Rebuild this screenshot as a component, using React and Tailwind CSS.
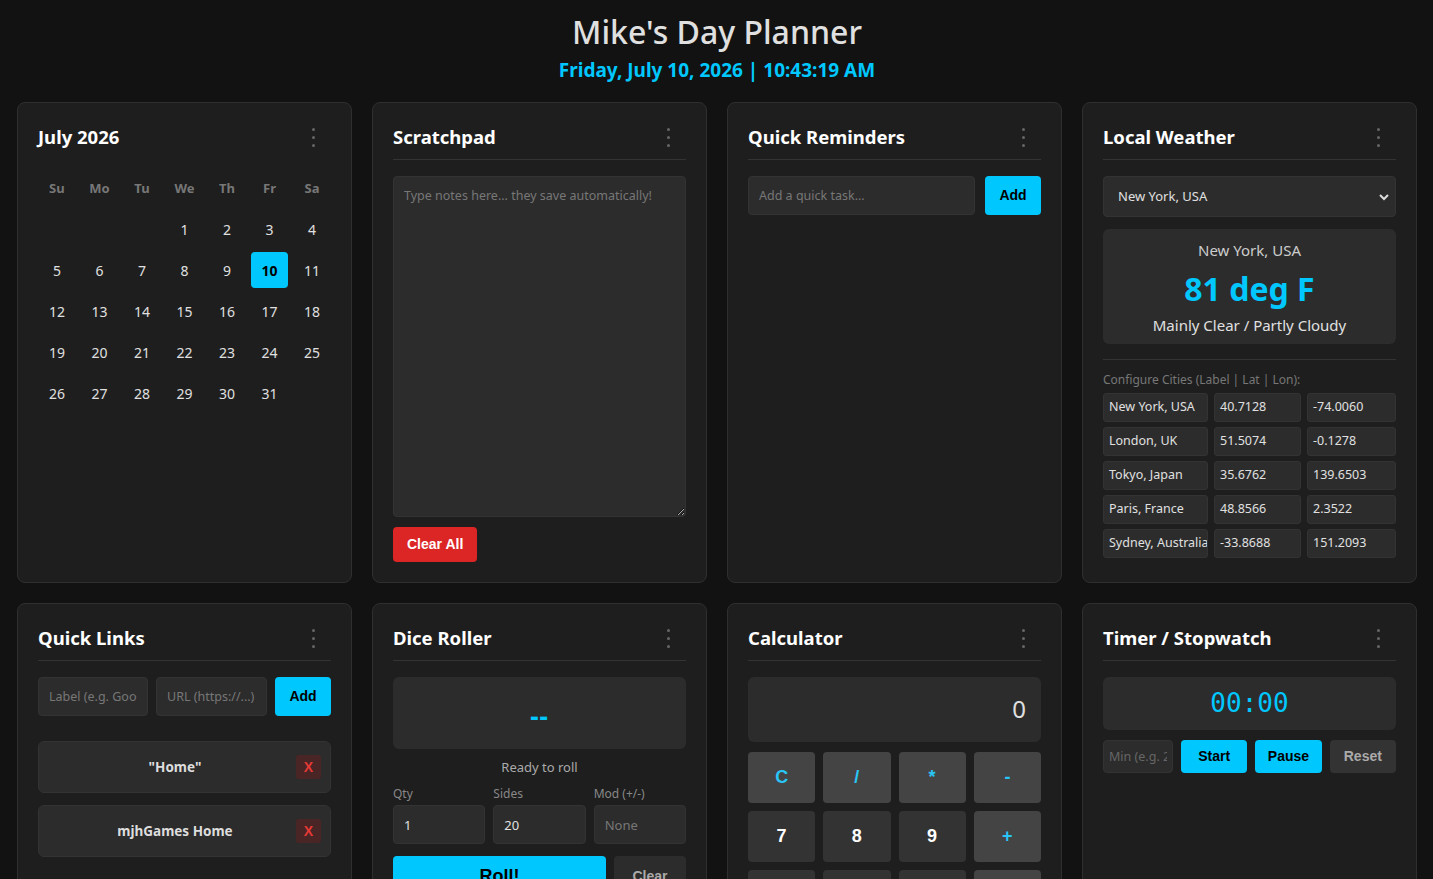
import React from "react";

const CYAN = "bg-[#00c8ff]";

function Dots() {
  return (
    <div className="mr-[8px] flex w-[20px] flex-col items-center gap-[5px]">
      <span className="h-[3px] w-[3px] rounded-full bg-[#666]" />
      <span className="h-[3px] w-[3px] rounded-full bg-[#666]" />
      <span className="h-[3px] w-[3px] rounded-full bg-[#666]" />
    </div>
  );
}

function Card({ title, children, plainHeader = false }) {
  return (
    <div className="rounded-[8px] border border-[#2f2f2f] bg-[#1e1e1e] px-[20px] pt-[19px] pb-[20px]">
      <div
        className={
          "flex h-[38px] items-start justify-between border-b pt-[3px] " +
          (plainHeader ? "mb-[10px] border-transparent" : "mb-[16px] border-[#333]")
        }
      >
        <h2 className="text-[18.5px] leading-[24px] font-bold text-white">{title}</h2>
        <div className="pt-[3px]">
          <Dots />
        </div>
      </div>
      {children}
    </div>
  );
}

function Calendar() {
  const heads = ["Su", "Mo", "Tu", "We", "Th", "Fr", "Sa"];
  const cells = [null, null, null];
  for (let d = 1; d <= 31; d++) cells.push(d);
  return (
    <Card title="July 2026" plainHeader>
      <div className="grid grid-cols-7 gap-x-[4.67px] gap-y-[5px]">
        {heads.map((h) => (
          <div key={h} className="flex h-[36px] items-center justify-center pt-[2px] text-[13px] font-bold text-[#777]">
            {h}
          </div>
        ))}
        {cells.map((d, i) =>
          d === 10 ? (
            <div key={i} className={"flex h-[36px] items-center justify-center rounded-[4px] text-[14px] font-bold text-black " + CYAN}>
              {d}
            </div>
          ) : (
            <div key={i} className="flex h-[36px] items-center justify-center text-[14px] text-[#e0e0e0]">
              {d}
            </div>
          )
        )}
      </div>
    </Card>
  );
}

function Scratchpad() {
  return (
    <Card title="Scratchpad">
      <textarea
        placeholder="Type notes here... they save automatically!"
        className="block h-[341px] w-full resize-y rounded-[4px] border border-[#333] bg-[#2c2c2c] px-[10px] py-[10px] text-[12.5px] text-[#e0e0e0] placeholder-[#777] outline-none"
      />
      <button className="mt-[10px] h-[35px] rounded-[4px] bg-[#dc2626] px-[14px] font-['Liberation_Sans',Arial,sans-serif] text-[14px] font-bold text-white">
        Clear All
      </button>
    </Card>
  );
}

function Reminders() {
  return (
    <Card title="Quick Reminders">
      <div className="flex gap-[10px]">
        <input
          placeholder="Add a quick task..."
          className="h-[39px] min-w-0 flex-1 rounded-[4px] border border-[#333] bg-[#2c2c2c] px-[10px] text-[12.5px] text-[#e0e0e0] placeholder-[#777] outline-none"
        />
        <button className={"h-[39px] w-[56px] rounded-[4px] font-['Liberation_Sans',Arial,sans-serif] text-[14px] font-bold text-black " + CYAN}>
          Add
        </button>
      </div>
    </Card>
  );
}

function Weather() {
  const cities = [
    ["New York, USA", "40.7128", "-74.0060"],
    ["London, UK", "51.5074", "-0.1278"],
    ["Tokyo, Japan", "35.6762", "139.6503"],
    ["Paris, France", "48.8566", "2.3522"],
    ["Sydney, Australia", "-33.8688", "151.2093"],
  ];
  return (
    <Card title="Local Weather">
      <div className="relative flex h-[41px] items-center rounded-[4px] border border-[#333] bg-[#2c2c2c] px-[14px] text-[13px] text-[#e0e0e0]">
        New York, USA
        <svg className="absolute right-[5px] top-[15px]" width="12" height="10" viewBox="0 0 12 10">
          <path d="M2 3 L6 7 L10 3" fill="none" stroke="#ddd" strokeWidth="2" />
        </svg>
      </div>
      <div className="mt-[12px] flex h-[115px] flex-col items-center rounded-[6px] bg-[#2c2c2c] pt-[11px]">
        <div className="text-[15px] leading-[20px] text-[#ccc]">New York, USA</div>
        <div className="mt-[9px] text-[32px] leading-[40px] font-bold text-[#00c8ff]">81 deg F</div>
        <div className="mt-[6px] text-[15px] leading-[20px] text-[#e0e0e0]">Mainly Clear / Partly Cloudy</div>
      </div>
      <div className="mt-[15px] border-t border-[#333] pt-[12px]">
        <div className="text-[12px] leading-[16px] text-[#777]">Configure Cities (Label | Lat | Lon):</div>
        <div className="mt-[5px] flex flex-col gap-[5px]">
          {cities.map((c) => (
            <div key={c[0]} className="flex gap-[6px]">
              <div className="flex h-[29px] w-[105px] items-center overflow-hidden whitespace-nowrap rounded-[3px] border border-[#333] bg-[#2c2c2c] px-[5px] text-[12.5px] text-[#e0e0e0]">
                {c[0]}
              </div>
              <div className="flex h-[29px] w-[87px] items-center rounded-[3px] border border-[#333] bg-[#2c2c2c] px-[5px] text-[12.5px] text-[#e0e0e0]">
                {c[1]}
              </div>
              <div className="flex h-[29px] flex-1 items-center rounded-[3px] border border-[#333] bg-[#2c2c2c] px-[5px] text-[12.5px] text-[#e0e0e0]">
                {c[2]}
              </div>
            </div>
          ))}
        </div>
      </div>
    </Card>
  );
}

function QuickLinks() {
  const links = ['"Home"', "mjhGames Home"];
  return (
    <Card title="Quick Links">
      <div className="flex items-center">
        <input
          placeholder="Label (e.g. Google)"
          className="h-[39px] w-[110px] rounded-[4px] border border-[#333] bg-[#2c2c2c] px-[10px] text-[12.5px] placeholder-[#777] outline-none"
        />
        <input
          placeholder="URL (https://...)"
          className="ml-[8px] h-[39px] w-[111px] rounded-[4px] border border-[#333] bg-[#2c2c2c] px-[10px] text-[12.5px] placeholder-[#777] outline-none"
        />
        <button className={"ml-auto h-[39px] w-[56px] rounded-[4px] font-['Liberation_Sans',Arial,sans-serif] text-[14px] font-bold text-black " + CYAN}>
          Add
        </button>
      </div>
      <div className="mt-[25px] flex flex-col gap-[12px]">
        {links.map((l) => (
          <div key={l} className="flex h-[52px] items-center rounded-[6px] border border-[#333] bg-[#2c2c2c] pl-[15px] pr-[9px]">
            <span className="flex-1 text-center text-[13.5px] font-bold text-[#ddd]">{l}</span>
            <span className="flex h-[24px] w-[25px] items-center justify-center rounded-[3px] bg-[#4a2526] font-['Liberation_Sans',Arial,sans-serif] text-[14px] font-bold text-[#e53935]">
              X
            </span>
          </div>
        ))}
      </div>
    </Card>
  );
}

function Dice() {
  const field = "h-[39px] w-full rounded-[4px] border border-[#333] bg-[#2c2c2c] px-[10px] text-[13px] text-[#e0e0e0] placeholder-[#777] outline-none";
  return (
    <Card title="Dice Roller">
      <div className="flex h-[72px] items-center justify-center rounded-[6px] bg-[#2c2c2c]">
        <span className="mt-[6px] text-[26px] font-bold tracking-[1px] text-[#00c8ff]">--</span>
      </div>
      <div className="mt-[9px] text-center text-[13px] leading-[18px] text-[#aaa]">Ready to roll</div>
      <div className="mt-[10px] grid grid-cols-3 gap-[8px]">
        {[
          ["Qty", "1", ""],
          ["Sides", "20", ""],
          ["Mod (+/-)", "", "None"],
        ].map(([lab, val, ph]) => (
          <div key={lab}>
            <div className="text-[12px] leading-[16px] text-[#888]">{lab}</div>
            <input defaultValue={val} placeholder={ph} className={"mt-[3px] " + field} />
          </div>
        ))}
      </div>
      <div className="mt-[12px] flex gap-[8px]">
        <button className={"h-[40px] flex-1 rounded-[4px] font-['Liberation_Sans',Arial,sans-serif] text-[18px] font-bold text-black " + CYAN}>
          Roll!
        </button>
        <button className="h-[40px] w-[72px] rounded-[4px] bg-[#2c2c2c] font-['Liberation_Sans',Arial,sans-serif] text-[14px] font-bold text-[#aaa]">
          Clear
        </button>
      </div>
    </Card>
  );
}

function Calculator() {
  const keys = [
    ["C", true], ["/", true], ["*", true], ["-", true],
    ["7", false], ["8", false], ["9", false], ["+", true],
    ["4", false], ["5", false], ["6", false], ["=", true],
    ["1", false], ["2", false], ["3", false], [".", false],
  ];
  return (
    <Card title="Calculator">
      <div className="flex h-[65px] items-center justify-end rounded-[6px] bg-[#2c2c2c] pr-[15px] pb-[2px] text-[24px] text-[#e0e0e0]">
        0
      </div>
      <div className="mt-[10px] grid grid-cols-4 gap-[8px]">
        {keys.map(([k, op]) => (
          <button
            key={k}
            className={
              "h-[51px] rounded-[4px] font-['Liberation_Sans',Arial,sans-serif] text-[18px] font-bold " +
              (op ? "bg-[#444] text-[#29c5f6]" : "bg-[#333] text-white")
            }
          >
            {k}
          </button>
        ))}
      </div>
    </Card>
  );
}

function Timer() {
  const btn = "h-[33px] flex-1 rounded-[4px] font-['Liberation_Sans',Arial,sans-serif] text-[14px] font-bold";
  return (
    <Card title="Timer / Stopwatch">
      <div className="flex h-[53px] items-center justify-center rounded-[6px] bg-[#2c2c2c] font-['DejaVu_Sans_Mono',monospace] text-[26px] text-[#00c8ff]">
        00:00
      </div>
      <div className="mt-[10px] flex gap-[8px]">
        <input
          placeholder="Min (e.g. 25)"
          className="h-[33px] w-[70px] rounded-[4px] border border-[#333] bg-[#2c2c2c] px-[5px] text-[12.5px] placeholder-[#666] outline-none"
        />
        <button className={btn + " text-black " + CYAN}>Start</button>
        <button className={btn + " text-black " + CYAN}>Pause</button>
        <button className={btn + " bg-[#333] text-[#aaa]"}>Reset</button>
      </div>
    </Card>
  );
}

export default function App() {
  return (
    <div className="min-h-screen bg-[#121212] pl-[17px] pr-[16px] pb-[20px] font-['Noto_Sans','Open_Sans',sans-serif] text-[#e0e0e0]">
      <header className="pt-[12px] text-center">
        <h1 className="text-[32px] leading-[40px] font-medium text-[#e0e0e0]">Mike's Day Planner</h1>
        <div className="mt-[6px] text-[19px] leading-[24px] font-bold text-[#00c8ff]">
          Friday, July 10, 2026 | 10:43:19 AM
        </div>
      </header>
      <main className="mt-[20px] grid grid-cols-4 gap-[20px]">
        <Calendar />
        <Scratchpad />
        <Reminders />
        <Weather />
        <QuickLinks />
        <Dice />
        <Calculator />
        <Timer />
      </main>
    </div>
  );
}
